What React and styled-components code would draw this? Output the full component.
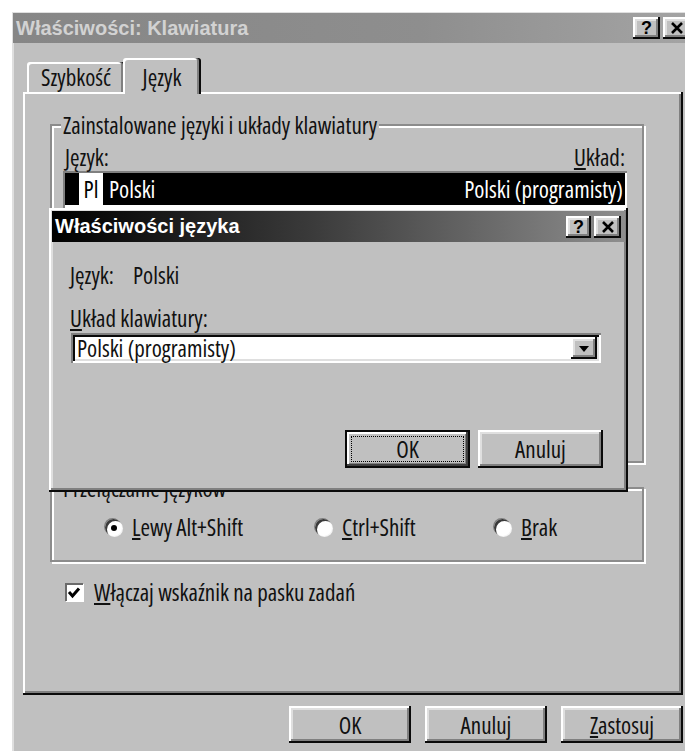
import React from 'react';
import styled, { createGlobalStyle, css } from 'styled-components';

const UI_FONT = `"Open Sans", "Liberation Sans", Arial, sans-serif`;
const TITLE_FONT = `"Liberation Sans", Arial, sans-serif`;

const GlobalStyle = createGlobalStyle`
  html, body {
    margin: 0;
    padding: 0;
    background: #fff;
    overflow: hidden;
  }
  #root {
    width: 685px;
    height: 751px;
    overflow: hidden;
  }
`;

// classic 3D edges
const raised = css`
  box-shadow:
    inset -2px -2px 0 #0a0a0a,
    inset 2px 2px 0 #fff,
    inset -4px -4px 0 #808080,
    inset 4px 4px 0 #dfdfdf;
`;

const sunken = css`
  box-shadow:
    inset 2px 2px 0 #808080,
    inset -2px -2px 0 #fff,
    inset 4px 4px 0 #0a0a0a,
    inset -4px -4px 0 #dfdfdf;
`;

const Page = styled.div`
  width: 685px;
  height: 751px;
  padding: 10px 0 0 10px;
  box-sizing: border-box;
`;

const Window = styled.div`
  width: 686px;
  height: 770px;
  padding: 3px;
  box-sizing: border-box;
  background: #c0c0c0;
  ${raised}
  font-family: ${UI_FONT};
  font-stretch: 75%;
  font-weight: 400;
  font-size: 23px;
  color: #111;
  display: flex;
  flex-direction: column;
`;

const TitleBar = styled.div`
  height: ${p => p.$h}px;
  flex-shrink: 0;
  display: flex;
  align-items: center;
  justify-content: space-between;
  padding: 0 ${p => p.$pr}px 0 3px;
  background: ${p => p.$active
    ? 'linear-gradient(90deg, #000 0%, #3a3a3a 45%, #8e8e8e 100%)'
    : 'linear-gradient(90deg, #868686 0%, #8e8e8e 60%, #a4a4a4 100%)'};
  color: ${p => (p.$active ? '#fff' : '#d2d2d2')};
  font-family: ${TITLE_FONT};
  font-stretch: normal;
  font-weight: bold;
  font-size: 20px;
  white-space: nowrap;
`;

const TitleButtons = styled.div`
  display: flex;
  gap: 3px;
`;

const TitleButton = styled.div`
  width: ${p => p.$w}px;
  height: 22px;
  box-sizing: border-box;
  background: #c0c0c0;
  ${raised}
  display: flex;
  align-items: center;
  justify-content: center;
  color: #000;
  font-family: ${TITLE_FONT};
  font-weight: bold;
  font-size: 18px;
  line-height: 1;
`;

const CloseGlyph = () => (
  <svg width="14" height="12" viewBox="0 0 14 12">
    <path d="M2 1 L12 11 M12 1 L2 11" stroke="#000" strokeWidth="2.6" />
  </svg>
);

const Body = styled.div`
  padding: 15px 0 0 10px;
  display: flex;
  flex-direction: column;
`;

const Tabs = styled.div`
  height: 34px;
  display: flex;
  align-items: flex-end;
  padding-left: 4px;
  position: relative;
  z-index: 2;
`;

const Tab = styled.div`
  width: ${p => p.$w}px;
  height: ${p => (p.$active ? 36 : 30)}px;
  margin: 0 ${p => (p.$active ? -2 : 0)}px ${p => (p.$active ? -2 : 0)}px;
  box-sizing: border-box;
  display: flex;
  justify-content: center;
  align-items: ${p => (p.$active ? 'flex-start' : 'center')};
  padding-top: ${p => (p.$active ? 3 : 0)}px;
  background: #c0c0c0;
  border-radius: 3px 3px 0 0;
  position: relative;
  z-index: ${p => (p.$active ? 1 : 0)};
  box-shadow:
    inset -2px 0 0 #0a0a0a,
    inset -4px 0 0 #808080,
    inset 2px 2px 0 #fff;
`;

const Panel = styled.div`
  position: relative;
  width: 660px;
  height: 603px;
  box-sizing: border-box;
  padding-left: 27px;
  display: flex;
  flex-direction: column;
  background: #c0c0c0;
  box-shadow:
    inset -2px -2px 0 #0a0a0a,
    inset 2px 2px 0 #fff,
    inset -4px -4px 0 #808080;
`;

const Group = styled.fieldset`
  width: 594px;
  box-sizing: border-box;
  margin: ${p => p.$mt}px 0 0 0;
  padding: 0 17px ${p => p.$pb}px 13px;
  min-inline-size: 0;
  border: 2px solid #8c8c8c;
  box-shadow: inset 2px 2px 0 #fff, 2px 2px 0 #fff;
`;

const Legend = styled.legend`
  margin-left: -4px;
  padding: 0 2px;
  line-height: 24px;
  background: #c0c0c0;
  position: relative;
`;

const ColumnHeads = styled.div`
  margin-top: 8px;
  line-height: 24px;
  display: flex;
  justify-content: space-between;
`;

const ListBox = styled.div`
  margin: 2px -2px 0;
  height: 271px;
  padding: 2px;
  box-sizing: border-box;
  background: #fff;
  box-shadow: inset 2px 2px 0 #808080, inset -2px -2px 0 #fff;
`;

const ListRow = styled.div`
  height: 32px;
  display: flex;
  align-items: center;
  padding: 0 2px 0 14px;
  background: ${p => (p.$selected ? '#000' : 'transparent')};
  color: ${p => (p.$selected ? '#fff' : '#000')};
`;

const LangBadge = styled.span`
  width: 24px;
  text-align: center;
  background: #fff;
  color: #000;
  height: 32px;
  line-height: 32px;
  margin-right: 6px;
`;

const Spacer = styled.span`
  flex: 1;
`;

const RadioRow = styled.div`
  display: grid;
  grid-template-columns: 210px 179px auto;
  padding-top: 15px;
  padding-left: 40px;
  line-height: 24px;
`;

const Option = styled.label`
  display: flex;
  align-items: center;
  gap: 10px;
`;

const Radio = styled.span`
  width: 17px;
  height: 17px;
  border-radius: 50%;
  background: #fff;
  box-shadow:
    inset 2px 2px 0 #3a3a3a,
    -1px -1px 0 #808080,
    1px 1px 0 #f4f4f4;
  display: flex;
  align-items: center;
  justify-content: center;

  &::after {
    content: '';
    width: 6px;
    height: 6px;
    border-radius: 50%;
    background: ${p => (p.$checked ? '#000' : 'transparent')};
    margin: 1px 0 0 1px;
  }
`;

const CheckRow = styled.label`
  margin: 18px 0 0 15px;
  line-height: 24px;
  display: flex;
  align-items: center;
  gap: 11px;
`;

const CheckBox = styled.span`
  width: 18px;
  height: 18px;
  background: #fff;
  box-shadow:
    inset 2px 2px 0 #6a6a6a,
    1px 1px 0 #fff;
  display: flex;
  align-items: center;
  justify-content: center;
`;

const CheckMark = () => (
  <svg width="14" height="13" viewBox="0 0 14 13">
    <path d="M2 6 L5.5 10 L12 2.5" fill="none" stroke="#000" strokeWidth="3" />
  </svg>
);

const ButtonRow = styled.div`
  display: flex;
  justify-content: flex-end;
  gap: ${p => p.$gap}px;
  margin-top: ${p => p.$mt}px;
  width: ${p => (p.$w ? `${p.$w}px` : 'auto')};
`;

const Button = styled.div`
  width: ${p => p.$w}px;
  height: ${p => p.$h}px;
  box-sizing: border-box;
  background: #c0c0c0;
  display: flex;
  align-items: center;
  justify-content: center;
  ${p => (p.$default
    ? css`
        box-shadow:
          inset 0 0 0 2px #0a0a0a,
          inset -4px -4px 0 #404040,
          inset 4px 4px 0 #fff,
          inset -5px -5px 0 #808080;
      `
    : raised)}
`;

const FocusRing = styled.span`
  flex: 1;
  align-self: stretch;
  margin: 6px;
  border: 1px dotted #000;
  display: flex;
  align-items: center;
  justify-content: center;
`;

const Dialog = styled.div`
  position: absolute;
  left: 26px;
  top: 116px;
  width: 579px;
  height: 284px;
  padding: 3px;
  box-sizing: border-box;
  background: #c0c0c0;
  ${raised}
  display: flex;
  flex-direction: column;
  z-index: 3;
`;

const DialogContent = styled.div`
  padding: 21px 22px 0 18px;
  display: flex;
  flex-direction: column;
`;

const InfoRow = styled.div`
  line-height: 24px;
  display: flex;
`;

const InfoLabel = styled.span`
  width: 63px;
`;

const FieldLabel = styled.div`
  margin-top: 19px;
  line-height: 24px;
`;

const Combo = styled.div`
  margin: 3px 0 0 1px;
  width: 530px;
  height: 30px;
  box-sizing: border-box;
  padding: 4px 4px 4px 6px;
  background: #fff;
  ${sunken}
  display: flex;
  align-items: center;
  justify-content: space-between;
`;

const ComboButton = styled.span`
  width: 26px;
  height: 22px;
  box-sizing: border-box;
  background: #c0c0c0;
  ${raised}
  display: flex;
  align-items: center;
  justify-content: center;

  &::after {
    content: '';
    border-left: 5px solid transparent;
    border-right: 5px solid transparent;
    border-top: 6px solid #000;
    margin-top: 1px;
  }
`;

export default function App() {
  return (
    <>
      <GlobalStyle />
      <Page>
        <Window>
          <TitleBar $h={30} $pr={3}>
            <span>Właściwości: Klawiatura</span>
            <TitleButtons>
              <TitleButton $w={27}>?</TitleButton>
              <TitleButton $w={27}><CloseGlyph /></TitleButton>
            </TitleButtons>
          </TitleBar>

          <Body>
            <Tabs>
              <Tab $w={98}>Szybkość</Tab>
              <Tab $w={78} $active>Język</Tab>
            </Tabs>

            <Panel>
              <Group $mt={21} $pb={19}>
                <Legend>Zainstalowane języki i układy klawiatury</Legend>
                <ColumnHeads>
                  <span><u>J</u>ęzyk:</span>
                  <span><u>U</u>kład:</span>
                </ColumnHeads>
                <ListBox>
                  <ListRow $selected>
                    <LangBadge>Pl</LangBadge>
                    <span>Polski</span>
                    <Spacer />
                    <span>Polski (programisty)</span>
                  </ListRow>
                </ListBox>
              </Group>

              <Group $mt={13} $pb={21}>
                <Legend>Przełączanie języków</Legend>
                <RadioRow>
                  <Option><Radio $checked /><span><u>L</u>ewy Alt+Shift</span></Option>
                  <Option><Radio /><span><u>C</u>trl+Shift</span></Option>
                  <Option><Radio /><span><u>B</u>rak</span></Option>
                </RadioRow>
              </Group>

              <CheckRow>
                <CheckBox><CheckMark /></CheckBox>
                <span><u>W</u>łączaj wskaźnik na pasku zadań</span>
              </CheckRow>

              <Dialog>
                <TitleBar $h={31} $pr={4} $active>
                  <span>Właściwości języka</span>
                  <TitleButtons>
                    <TitleButton $w={25}>?</TitleButton>
                    <TitleButton $w={27}><CloseGlyph /></TitleButton>
                  </TitleButtons>
                </TitleBar>
                <DialogContent>
                  <InfoRow>
                    <InfoLabel>Język:</InfoLabel>
                    <span>Polski</span>
                  </InfoRow>
                  <FieldLabel><u>U</u>kład klawiatury:</FieldLabel>
                  <Combo>
                    <span>Polski (programisty)</span>
                    <ComboButton />
                  </Combo>
                  <ButtonRow $gap={8} $mt={67}>
                    <Button $w={125} $h={38} $default>
                      <FocusRing>OK</FocusRing>
                    </Button>
                    <Button $w={125} $h={38}>Anuluj</Button>
                  </ButtonRow>
                </DialogContent>
              </Dialog>
            </Panel>

            <ButtonRow $gap={14} $mt={11} $w={660}>
              <Button $w={122} $h={37}>OK</Button>
              <Button $w={122} $h={37}>Anuluj</Button>
              <Button $w={122} $h={37}><span><u>Z</u>astosuj</span></Button>
            </ButtonRow>
          </Body>
        </Window>
      </Page>
    </>
  );
}
